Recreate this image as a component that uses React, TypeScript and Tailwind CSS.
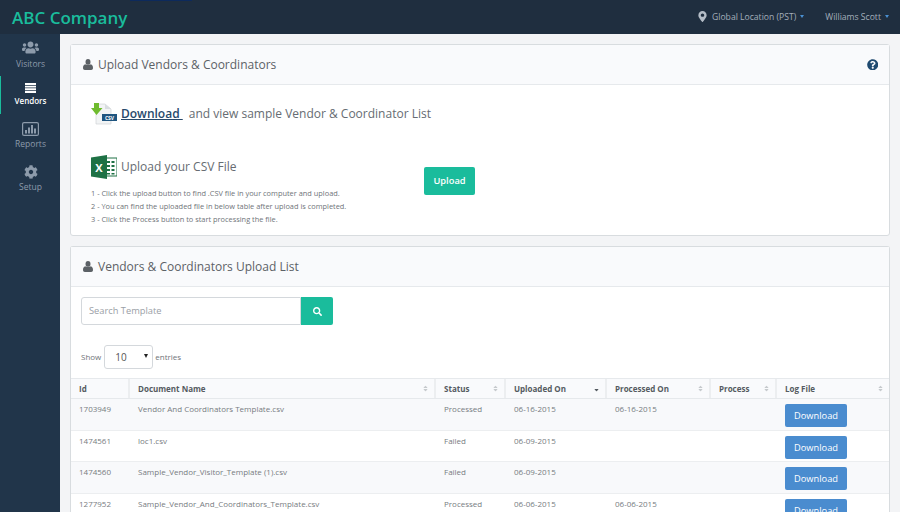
import { FaUsers, FaCog, FaMapMarkerAlt, FaQuestionCircle, FaSearch, FaSort, FaSortDown } from "react-icons/fa";

const font = "font-['Open_Sans',sans-serif]";

function Caret() {
  return <span className="ml-[4px] inline-block h-0 w-0 border-x-[2.500px] border-t-[3px] border-x-transparent border-t-[#4a90d2] align-middle" />;
}

function UserIcon() {
  return (
    <svg width="10" height="11" viewBox="0 0 10 11" className="shrink-0 mr-[5px]">
      <ellipse cx="5" cy="2.900" rx="2.500" ry="2.900" fill="#5c6166" />
      <path d="M2.200 5.300C3 6.300 7 6.300 7.800 5.300 9.200 5.600 10 6.800 10 9c0 1.200-.7 2-1.800 2H1.800C.7 11 0 10.200 0 9c0-2.200.8-3.400 2.200-3.700z" fill="#5c6166" />
    </svg>
  );
}

function ListIcon() {
  return (
    <svg width="11" height="10" viewBox="0 0 11 10" className="shrink-0">
      <path d="M0 0h11v2H0zM0 2.700h11v1.800H0zM0 5.200h11V7H0zM0 7.700h11V10H0z" fill="#fff" />
    </svg>
  );
}

function ChartIcon() {
  return (
    <svg width="17" height="14" viewBox="0 0 17 14" className="shrink-0">
      <rect x="0.600" y="0.600" width="15.800" height="12.800" rx="1.500" fill="none" stroke="#8d9bab" strokeWidth="1.200" />
      <path d="M3 8h2v3.500H3zM6 5.500h2v6H6zM9 3h2v8.500H9zM12 6.500h2v5h-2z" fill="#8d9bab" />
    </svg>
  );
}

function NavItem({ icon, label, active, h }: { icon: React.ReactNode; label: string; active?: boolean; h: string }) {
  return (
    <div className={`flex flex-col items-center ${h} border-l ${active ? "border-[#1abc9c] text-white font-semibold" : "border-transparent text-[#8d9bab]"}`}>
      {icon}
      <span className={`${active ? "text-[8px]" : "text-[8.500px]"} leading-[12px] mt-[2px]`}>{label}</span>
    </div>
  );
}

function CsvIcon() {
  return (
    <svg width="27" height="22" viewBox="0 0 27 22" className="shrink-0">
      <path d="M5 1h9l6 5v15H5z" fill="#f2f4f5" stroke="#c9ced2" strokeWidth="0.600" />
      <path d="M14 1l6 5h-6z" fill="#d9dde0" />
      <rect x="11" y="11" width="15" height="7" fill="#1f5580" />
      <text x="18.500" y="16.700" fontSize="5" fontWeight="700" fill="#fff" textAnchor="middle" fontFamily="Open Sans">CSV</text>
      <path d="M3 0h5v5h3.500L5.500 12 0 5h3z" fill="#6fbb2e" />
    </svg>
  );
}

function ExcelIcon() {
  return (
    <svg width="26" height="24" viewBox="0 0 26 24" className="shrink-0">
      <path d="M14 3h12v18H14z" fill="#fff" stroke="#1e7145" strokeWidth="1" />
      <path d="M16 6h3v2h-3zM20.500 6h3v2h-3zM16 10h3v2h-3zM20.500 10h3v2h-3zM16 14h3v2h-3zM20.500 14h3v2h-3zM16 18h3v1.500h-3zM20.500 18h3v1.500h-3z" fill="#1e7145" />
      <path d="M0 2.500 16 0v24L0 21.500z" fill="#1e7145" />
      <text x="8" y="16.500" fontSize="11" fontWeight="700" fill="#fff" textAnchor="middle" fontFamily="Open Sans">X</text>
    </svg>
  );
}

const cols = [
  { label: "Id", w: "w-[59px]", sort: false },
  { label: "Document Name", w: "w-[306px]", sort: true },
  { label: "Status", w: "w-[70px]", sort: true },
  { label: "Uploaded On", w: "w-[101px]", sort: true, down: true },
  { label: "Processed On", w: "w-[104px]", sort: true },
  { label: "Process", w: "w-[66px]", sort: true },
  { label: "Log File", w: "flex-1", sort: true },
];

const rows = [
  ["1703949", "Vendor And Coordinators Template.csv", "Processed", "06-16-2015", "06-16-2015"],
  ["1474561", "loc1.csv", "Failed", "06-09-2015", ""],
  ["1474560", "Sample_Vendor_Visitor_Template (1).csv", "Failed", "06-09-2015", ""],
  ["1277952", "Sample_Vendor_And_Coordinators_Template.csv", "Processed", "06-06-2015", "06-06-2015"],
];

export default function App() {
  return (
    <div className={`${font} relative w-[900px] h-[512px] overflow-hidden bg-[#f3f4f6] flex flex-col`}>
      <div className="absolute left-[130px] top-0 w-[62px] h-px bg-[#0d2a5c]" />
      <header className="h-[34px] shrink-0 bg-[#1f2e3f] flex items-center pl-[12px] pr-[11px]">
        <span className="text-[#1abc9c] text-[17px] font-semibold leading-none">ABC Company</span>
        <div className="ml-auto flex items-center text-[#a4afbb] text-[8.600px]">
          <FaMapMarkerAlt className="text-[#b4bdc7] text-[11px] mr-[4px]" />
          <span>Global Location (PST)</span>
          <Caret />
          <span className="ml-[21px]">Williams Scott</span>
          <Caret />
        </div>
      </header>
      <div className="flex flex-1 min-h-0">
        <aside className="w-[60px] shrink-0 bg-[#21354a] pt-[5px] flex flex-col">
          <NavItem h="h-[37px]" label="Visitors" icon={<FaUsers className="text-[17px] text-[#8d9bab]" />} />
          <NavItem h="h-[38px] pt-[7px]" active label="Vendors" icon={<ListIcon />} />
          <NavItem h="h-[43px] pt-[8px]" label="Reports" icon={<ChartIcon />} />
          <NavItem h="h-[42px] pt-[8px]" label="Setup" icon={<FaCog className="text-[14px] text-[#8d9bab]" />} />
        </aside>
        <main className="flex-1 min-w-0 pt-[10px] pl-[10px] pr-[10px] flex flex-col gap-[10px]">
          <section className="h-[192px] shrink-0 bg-white border border-[#d8dcdf] rounded-[3px] flex flex-col">
            <div className="h-[40px] shrink-0 bg-[#f9fafc] border-b border-[#e6e9ec] flex items-center pl-[12px] pr-[11px] text-[#5c6166]">
              <UserIcon />
              <span className="text-[12px] mt-[1px]">Upload Vendors &amp; Coordinators</span>
              <FaQuestionCircle className="ml-auto text-[11.500px] text-[#1f4a70]" />
            </div>
            <div className="flex flex-col pl-[20px] pt-[17px]">
              <div className="flex items-center h-[24px]">
                <CsvIcon />
                <a className="ml-[3px] text-[#27496b] text-[12px] font-semibold underline">Download&nbsp;</a>
                <span className="ml-[6px] text-[#666c72] text-[12px]">and view sample Vendor &amp; Coordinator List</span>
              </div>
              <div className="flex mt-[29px]">
                <div className="w-[333px]">
                  <div className="flex items-center h-[24px]">
                    <ExcelIcon />
                    <span className="ml-[4px] text-[#666c72] text-[12px]">Upload your CSV File</span>
                  </div>
                  <div className="mt-[8px] text-[7.400px] leading-[13px] text-[#6f7479]">
                    <p>1 - Click the upload button to find .CSV file in your computer and upload.</p>
                    <p>2 - You can find the uploaded file in below table after upload is completed.</p>
                    <p>3 - Click the Process button to start processing the file.</p>
                  </div>
                </div>
                <button className="self-start mt-[12px] w-[51px] h-[28px] bg-[#1abc9c] rounded-[2px] text-white text-[9.300px] font-semibold">Upload</button>
              </div>
            </div>
          </section>
          <section className="flex-1 min-h-0 bg-white border border-[#d8dcdf] border-b-0 rounded-t-[3px] flex flex-col">
            <div className="h-[40px] shrink-0 bg-[#f9fafc] border-b border-[#e6e9ec] flex items-center pl-[12px] text-[#5c6166]">
              <UserIcon />
              <span className="text-[12px] mt-[1px]">Vendors &amp; Coordinators Upload List</span>
            </div>
            <div className="flex shrink-0 mt-[10px] ml-[10px] h-[28px] w-[252px]">
              <input placeholder="Search Template" className="w-[220px] border border-[#d4d8dc] rounded-l-[3px] pl-[7px] text-[9.300px] text-[#6f7479] placeholder:text-[#9aa0a6] outline-none" />
              <button className="flex-1 bg-[#1abc9c] flex items-center justify-center rounded-r-[2px]">
                <FaSearch className="text-white text-[9px]" />
              </button>
            </div>
            <div className="flex shrink-0 items-center mt-[20px] ml-[10px] h-[24px] text-[8px] text-[#6f7479]">
              <span>Show</span>
              <div className="relative ml-[3px] w-[49px] h-[24px] border border-[#d4d8dc] rounded-[3px] flex items-center pl-[10px] text-[10px] text-[#555]">
                10
                <span className="absolute right-[4px] top-[8px] h-0 w-0 border-x-[2.500px] border-t-[4px] border-x-transparent border-t-[#222]" />
              </div>
              <span className="ml-[2px]">entries</span>
            </div>
            <div className="mt-[9px] flex h-[21px] shrink-0 bg-[#f9fafc] border-y border-[#e6e9ec] text-[8px] font-bold text-[#555b61]">
              {cols.map((c) => (
                <div key={c.label} className={`${c.w} flex items-center pl-[8px] pr-[5px] border-r-2 border-[#eceef0] last:border-r-0`}>
                  <span>{c.label}</span>
                  {c.sort && (c.down
                    ? <FaSortDown className="ml-auto text-[7px] text-[#555b61]" />
                    : <FaSort className="ml-auto text-[7px] text-[#c6cacd]" />)}
                </div>
              ))}
            </div>
            {rows.map((r, i) => (
              <div key={r[0]} className={`flex h-[31.500px] shrink-0 border-b border-[#eceef0] text-[8px] text-[#777c81] leading-[11px] ${i % 2 === 0 ? "bg-[#f8f9fb]" : "bg-white"}`}>
                <div className="w-[59px] pl-[8px] pt-[4px]">{r[0]}</div>
                <div className="w-[306px] pl-[8px] pt-[4px]">{r[1]}</div>
                <div className="w-[70px] pl-[8px] pt-[4px]">{r[2]}</div>
                <div className="w-[101px] pl-[8px] pt-[4px]">{r[3]}</div>
                <div className="w-[104px] pl-[8px] pt-[4px]">{r[4]}</div>
                <div className="w-[66px]" />
                <div className="flex-1 pl-[8px] pt-[5px]">
                  <button className="w-[62px] h-[23px] bg-[#4a8ccf] rounded-[2px] text-white text-[9.300px]">Download</button>
                </div>
              </div>
            ))}
          </section>
        </main>
      </div>
    </div>
  );
}
